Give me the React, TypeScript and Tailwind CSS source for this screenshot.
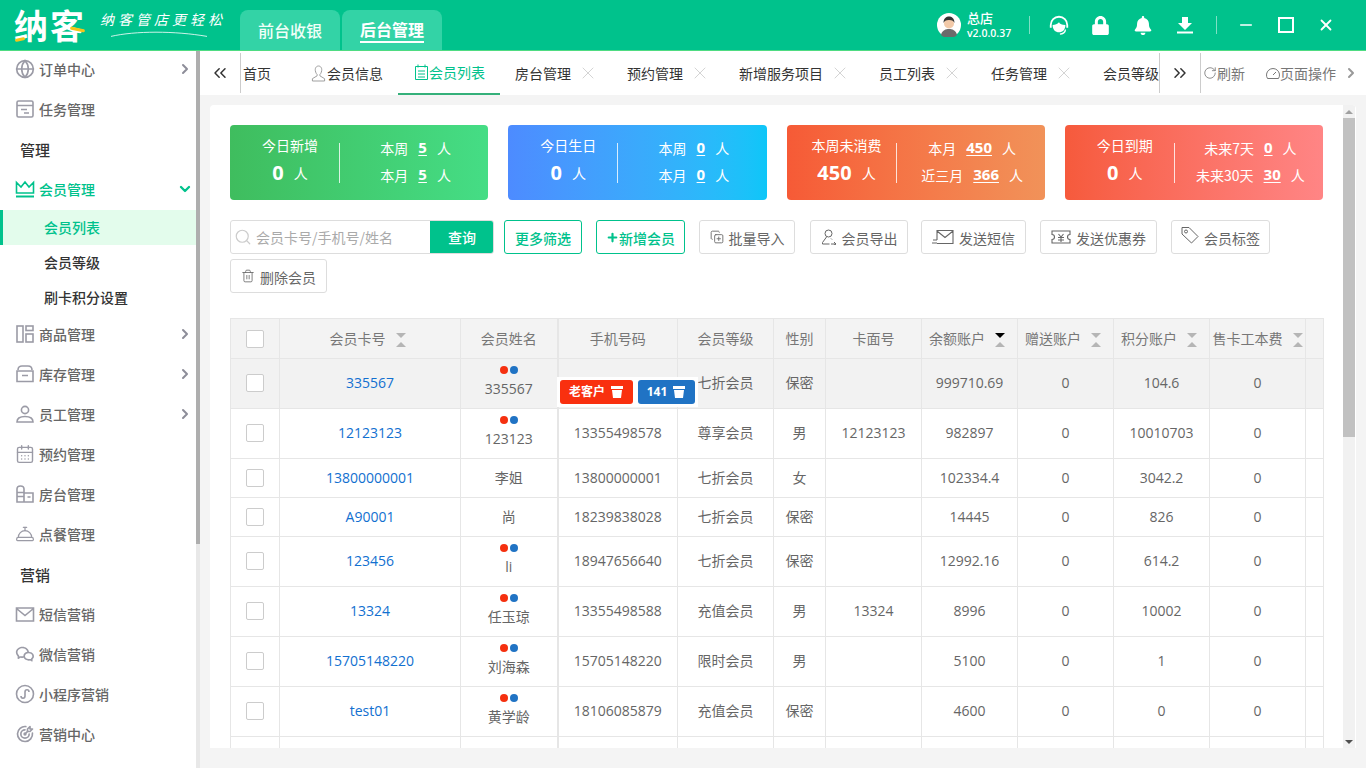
import { ChevronRight, ChevronDown, ChevronsLeft, ChevronsRight, X, Minus, Search, Plus, RotateCw, Trash2, CopyPlus, Globe, CalendarDays, ConciergeBell } from "lucide-react";
import { RiWechatLine } from "react-icons/ri";
import { TbTargetArrow } from "react-icons/tb";
import { FaBell, FaLock } from "react-icons/fa";
import type { ReactNode } from "react";

const FONT = { fontFamily: '"Open Sans", "Noto Sans CJK SC", sans-serif' };

function IconBox({ children }: { children: ReactNode }) {
  return (
    <svg viewBox="0 0 20 20" className="h-5 w-5 shrink-0" fill="none" stroke="currentColor" strokeWidth="1.6">
      {children}
    </svg>
  );
}

const TaskIcon = () => (
  <IconBox>
    <rect x="2" y="2" width="16" height="16" rx="1.5" />
    <path d="M2 6.5h16M6 10.5h6M9 14h5" />
  </IconBox>
);
const GoodsIcon = () => (
  <IconBox>
    <rect x="2" y="2" width="6" height="16" />
    <rect x="11" y="2" width="7" height="4.5" />
    <rect x="11" y="10" width="7" height="8" />
  </IconBox>
);
const StockIcon = () => (
  <IconBox>
    <path d="M3 6c0-3 2-4 4-4h6c2 0 4 1 4 4M2 7h16v10.5H2zM7 11.5h6" />
  </IconBox>
);
const StaffIcon = () => (
  <IconBox>
    <circle cx="10" cy="6" r="3.6" />
    <path d="M2 18c0-4 3-5.5 8-5.5s8 1.5 8 5.5z" />
  </IconBox>
);
const RoomIcon = () => (
  <IconBox>
    <path d="M2 18V5c0-2 1.500-3 3.500-3S9 3 9 5v13zM2 8.500h7M2 12.500h7M9 9h9v9H9zM12.500 13h3" />
  </IconBox>
);
const MiniIcon = () => (
  <IconBox>
    <circle cx="10" cy="10" r="8.500" />
    <path d="M6 12c0 3 4 3 4 0V8c0-3 4-3 4 0" />
  </IconBox>
);
const CrownIcon = () => (
  <IconBox>
    <path d="M1.500 14V3.500L6 8l4-5 4 5 4.500-4.500V14z" />
    <path d="M1 17.500h18" strokeWidth="2" />
  </IconBox>
);
const SmsIcon = () => (
  <IconBox>
    <path d="M1.500 4h17v13h-17zM1.500 4.500l8.500 7 8.500-7" />
  </IconBox>
);

type MenuItem = { label: string; icon: ReactNode; arrow?: boolean };
const topItems: MenuItem[] = [
  { label: "订单中心", icon: <Globe className="h-5 w-5" strokeWidth={2} />, arrow: true },
  { label: "任务管理", icon: <TaskIcon /> },
];
const midItems: MenuItem[] = [
  { label: "商品管理", icon: <GoodsIcon />, arrow: true },
  { label: "库存管理", icon: <StockIcon />, arrow: true },
  { label: "员工管理", icon: <StaffIcon />, arrow: true },
  { label: "预约管理", icon: <CalendarDays className="h-5 w-5" strokeWidth={1.7} /> },
  { label: "房台管理", icon: <RoomIcon /> },
  { label: "点餐管理", icon: <ConciergeBell className="h-5 w-5" strokeWidth={1.5} /> },
];
const saleItems: MenuItem[] = [
  { label: "短信营销", icon: <SmsIcon /> },
  { label: "微信营销", icon: <RiWechatLine className="h-5 w-5" /> },
  { label: "小程序营销", icon: <MiniIcon /> },
  { label: "营销中心", icon: <TbTargetArrow className="h-5 w-5" /> },
];

function MenuRow({ item }: { item: MenuItem }) {
  return (
    <div className="flex h-10 items-center pb-[2px] pl-[15px] pr-[3px] text-[#666]">
      <span className="flex h-5 w-5 text-[#9b9ba6]">{item.icon}</span>
      <span className="ml-1 flex-1 text-sm font-medium leading-none">{item.label}</span>
      {item.arrow && <ChevronRight className="h-4 w-4 text-[#8d8d99]" strokeWidth={3} />}
    </div>
  );
}

function Sidebar() {
  return (
    <aside className="flex w-[200px] shrink-0 bg-white">
      <div className="-mt-px w-[196px]">
        {topItems.map((m) => (
          <MenuRow key={m.label} item={m} />
        ))}
        <div className="flex h-10 items-center pl-5 text-[15px] font-medium text-[#333]">管理</div>
        <div className="flex h-10 items-center pb-[2px] pl-[15px] pr-[3px] text-[#00c28c]">
          <CrownIcon />
          <span className="ml-1 flex-1 text-sm font-medium leading-none">会员管理</span>
          <ChevronDown className="h-4 w-4" strokeWidth={3.5} />
        </div>
        <div className="flex h-[35px] items-center border-l-[3px] border-[#00c28c] bg-[#e3fcec] pb-[2px] pl-[41px] text-sm font-medium text-[#00c28c]">
          会员列表
        </div>
        <div className="flex h-[35px] items-center pb-[2px] pl-11 text-sm font-medium text-[#333]">会员等级</div>
        <div className="flex h-[35px] items-center pb-[2px] pl-11 text-sm font-medium text-[#333]">刷卡积分设置</div>
        {midItems.map((m) => (
          <MenuRow key={m.label} item={m} />
        ))}
        <div className="flex h-10 items-center pl-5 text-[15px] font-medium text-[#333]">营销</div>
        {saleItems.map((m) => (
          <MenuRow key={m.label} item={m} />
        ))}
      </div>
      <div className="w-1 bg-[#e8e8e8]">
        <div className="h-[493px] bg-[#aeaeae]" />
      </div>
    </aside>
  );
}

function Header() {
  return (
    <header className="flex h-[51px] shrink-0 items-end border-b border-[#4fdc82] bg-[#00c28c] text-white">
      <div className="relative flex h-full w-[240px] shrink-0 items-center pl-[14px]">
        <span className="text-[34px] font-bold leading-none tracking-[2px]">纳客</span>
        <span className="absolute bottom-[9px] left-[15px] h-[3px] w-[10px] -rotate-12 rounded bg-[#f5c518]" />
        <span className="absolute bottom-[19px] left-[70px] h-[3px] w-[15px] rotate-12 rounded bg-[#f5c518]" />
        <div className="ml-[14px] flex flex-col">
          <span className="whitespace-nowrap text-[14px] italic leading-none tracking-[4px]">纳客管店更轻松</span>
          <svg viewBox="0 0 120 10" className="mt-[4px] h-[8px] w-[118px]" fill="none" stroke="white" strokeWidth="1">
            <path d="M0 8C30 1 80 1 120 8" />
          </svg>
        </div>
      </div>
      <div className="flex h-10 w-[100px] items-center justify-center rounded-t-lg bg-[#33d3a6] text-base font-medium text-[#f0fff8]">
        前台收银
      </div>
      <div className="ml-[2px] flex h-10 w-[100px] items-center justify-center rounded-t-lg bg-[#33d3a6] text-base font-bold">
        <span className="border-b-2 border-white leading-[23px]">后台管理</span>
      </div>
      <div className="flex h-full flex-1 items-center justify-end">
        <svg viewBox="0 0 24 24" className="h-6 w-6 shrink-0">
          <circle cx="12" cy="12" r="12" fill="#fff" />
          <path d="M4 22c1-5 5-6 8-6s7 1 8 6a12 12 0 0 1-16 0z" fill="#6b6b6b" />
          <circle cx="12" cy="10.500" r="5" fill="#f2c9a8" />
          <path d="M6.500 10c0-5 3-6.500 5.500-6.500s5.500 1.500 5.500 6.500c-1-2-2-3-5.500-3s-4.500 1-5.500 3z" fill="#333" />
        </svg>
        <div className="ml-[6px] flex w-[62px] flex-col">
          <span className="text-[13px] font-medium leading-[17px]">总店</span>
          <span className="whitespace-nowrap text-[10.500px] font-semibold leading-[15px]" style={FONT}>v2.0.0.37</span>
        </div>
        <div className="h-[18px] w-px bg-[#7fe0c5]" />
        <svg viewBox="0 0 24 24" className="ml-[18px] h-[22px] w-[22px]" fill="none" stroke="white" strokeWidth="2">
          <path d="M3 15v-3a9 9 0 0 1 18 0v3" />
          <path d="M5 12c3 0 5-1 7-3 1 2 3 3 7 3 0 5-3 8-7 8s-7-3-7-8z" fill="white" stroke="none" />
          <path d="M19 17c0 3-3 5-6 5" strokeWidth="1.500" />
        </svg>
        <FaLock className="ml-[22px] h-[19px] w-[17px]" />
        <FaBell className="ml-[25px] h-[19px] w-[18px]" />
        <svg viewBox="0 0 18 18" className="ml-[24px] h-[18px] w-[18px]" fill="white">
          <path d="M6 1h6v6h4l-7 7-7-7h4zM1 15.500h16V17.500H1z" />
        </svg>
        <div className="ml-[22px] h-[18px] w-px bg-[#7fe0c5]" />
        <Minus className="ml-[20px] h-[18px] w-[18px]" strokeWidth={2.2} />
        <svg viewBox="0 0 18 18" className="ml-[22px] h-[18px] w-[18px]" fill="none" stroke="white" strokeWidth="2">
          <rect x="2" y="2" width="14" height="14" />
        </svg>
        <X className="ml-[22px] mr-[31px] h-[18px] w-[18px]" strokeWidth={2.4} />
      </div>
    </header>
  );
}

const closableTabs = ["房台管理", "预约管理", "新增服务项目", "员工列表", "任务管理"];

function TabBar() {
  return (
    <div className="flex h-11 shrink-0 items-center bg-white text-sm text-[#333]">
      <div className="flex h-10 w-[41px] shrink-0 items-center justify-center border-r border-[#ccc]">
        <ChevronsLeft className="h-5 w-5 text-[#333]" strokeWidth={1.8} />
      </div>
      <div className="flex h-full w-[918px] shrink-0 items-center overflow-hidden whitespace-nowrap">
        <span className="ml-[2px] w-[68px] shrink-0">首页</span>
        <span className="flex w-[87px] shrink-0 items-center">
          <svg viewBox="0 0 16 18" className="mr-px h-[17px] w-[15px] text-[#999]" fill="none" stroke="currentColor" strokeWidth="1">
            <path d="M5 7.500C3.500 3 6 1 8 1s4.500 2 3 6.500c-.5 1.500-1 2-1.500 2.500v1.500l5 3V17H1.500v-2.500l5-3V10c-.5-.5-1-1-1.500-2.500z" />
          </svg>
          <span>会员信息</span>
        </span>
        <span className="flex h-full w-[102px] shrink-0 items-center border-b-2 border-[#35b07a] pl-[16px] text-[#00c28c]">
          <svg viewBox="0 0 15 16" className="h-4 w-[15px]" fill="none" stroke="currentColor" strokeWidth="1">
            <path d="M1.500 2.500h12v13h-12zM4 .5v3M11 .5v3M4 7h7M4 10h7M4 13h7" />
          </svg>
          <span className="mb-px">会员列表</span>
        </span>
        {closableTabs.map((t) => (
          <span key={t} className="flex shrink-0 items-center pl-[15px] pr-[14px]">
            <span>{t}</span>
            <X className="ml-[7px] h-5 w-5 text-[#d0d0d0]" strokeWidth={1.1} />
          </span>
        ))}
        <span className="shrink-0 pl-[15px]">会员等级</span>
      </div>
      <div className="flex h-10 w-[42px] shrink-0 items-center justify-center border-x border-[#ccc]">
        <ChevronsRight className="h-5 w-5 text-[#333]" strokeWidth={1.8} />
      </div>
      <div className="flex items-center text-[#777]">
        <RotateCw className="ml-[2px] h-[14px] w-[14px]" strokeWidth={1.4} />
        <span>刷新</span>
        <svg viewBox="0 0 14 14" className="ml-[21px] h-[14px] w-[14px]" fill="none" stroke="currentColor" strokeWidth="1">
          <path d="M1.500 12.500a6.500 6.500 0 1 1 11 0zM7 9l3-3" />
        </svg>
        <span>页面操作</span>
        <ChevronRight className="ml-[7px] h-4 w-4 text-[#999]" strokeWidth={3} />
      </div>
    </div>
  );
}

type Stat = {
  title: string;
  value: string;
  bg: string;
  rows: { label: string; value: string }[];
};
const stats: Stat[] = [
  {
    title: "今日新增",
    value: "0",
    bg: "bg-gradient-to-r from-[#3fbd5e] to-[#45dd85]",
    rows: [{ label: "本周", value: "5" }, { label: "本月", value: "5" }],
  },
  {
    title: "今日生日",
    value: "0",
    bg: "bg-gradient-to-r from-[#4d8bff] to-[#0dc6f8]",
    rows: [{ label: "本周", value: "0" }, { label: "本月", value: "0" }],
  },
  {
    title: "本周未消费",
    value: "450",
    bg: "bg-gradient-to-r from-[#f65a36] to-[#f19259]",
    rows: [{ label: "本月", value: "450" }, { label: "近三月", value: "366" }],
  },
  {
    title: "今日到期",
    value: "0",
    bg: "bg-gradient-to-r from-[#f65a3c] to-[#ff8585]",
    rows: [{ label: "未来7天", value: "0" }, { label: "未来30天", value: "30" }],
  },
];

function StatCard({ s }: { s: Stat }) {
  return (
    <div className={`flex h-[75px] items-center rounded text-white ${s.bg}`}>
      <div className="flex w-[109px] shrink-0 flex-col items-center pb-[3px] pl-[11px]">
        <span className="text-sm leading-[20px]">{s.title}</span>
        <span className="mt-[4px] flex items-center leading-[30px]">
          <span className="text-xl font-bold" style={FONT}>{s.value}</span>
          <span className="ml-[10px] text-sm">人</span>
        </span>
      </div>
      <div className="h-10 w-px shrink-0 bg-white/80" />
      <div className="flex flex-1 flex-col items-center pb-[2px] pl-[3px] text-sm">
        {s.rows.map((r) => (
          <div key={r.label} className="flex h-[27px] items-center">
            <span>{r.label}</span>
            <span className="ml-[10px] text-[15px] font-bold underline underline-offset-2" style={FONT}>{r.value}</span>
            <span className="ml-[10px]">人</span>
          </div>
        ))}
      </div>
    </div>
  );
}

function ToolButton({ icon, label, className }: { icon: ReactNode; label: string; className: string }) {
  return (
    <button className={`flex h-[34px] items-center justify-center rounded-[3px] border border-[#ddd] bg-white text-sm text-[#666] ${className}`}>
      {icon}
      <span className="ml-[5px] pt-[2px]">{label}</span>
    </button>
  );
}

const ExportIcon = (
  <svg viewBox="0 0 16 16" className="h-4 w-4" fill="none" stroke="currentColor" strokeWidth="1">
    <circle cx="7.500" cy="4.500" r="3.500" />
    <path d="M5.500 8L1.500 13.500V15h7M10 9.500l1 1M10 15h5M13 13l2 2-2 1" />
  </svg>
);
const SmsToolIcon = (
  <svg viewBox="0 0 22 16" className="h-4 w-[22px]" fill="none" stroke="currentColor" strokeWidth="1.100">
    <path d="M5 11V1.500h16v13H5M5 2l8 6.500L21 2M1 11h4M0 14h5" />
  </svg>
);
const CouponIcon = (
  <svg viewBox="0 0 20 14" className="h-[14px] w-5" fill="none" stroke="currentColor" strokeWidth="1.100">
    <path d="M1 1h18v3.500a2.500 2.500 0 0 0 0 5V13H1V9.500a2.500 2.500 0 0 0 0-5zM7.500 4l2.500 3 2.500-3M7 7.500h6M7 10h6M10 7v5" />
  </svg>
);
const TagIcon = (
  <svg viewBox="0 0 18 18" className="mb-[5px] h-[18px] w-[18px]" fill="none" stroke="currentColor" strokeWidth="1">
    <path d="M1 1.500h7l9 9-6.500 6.500-9.500-9z" />
    <circle cx="5" cy="5.500" r="1.500" />
  </svg>
);

function Toolbar() {
  return (
    <div className="mt-5 flex flex-wrap items-center gap-y-[5px]">
      <div className="flex h-[34px] w-[264px] overflow-hidden rounded-[3px] border border-[#ddd]">
        <div className="flex flex-1 items-center pl-[3px] text-sm text-[#aaa]">
          <Search className="h-[18px] w-[18px] text-[#ccc]" strokeWidth={1.6} />
          <span className="ml-[4px]">会员卡号/手机号/姓名</span>
        </div>
        <div className="-my-px -mr-px flex w-16 items-center justify-center bg-[#00c28c] text-sm font-medium text-white">查询</div>
      </div>
      <button className="ml-[10px] h-[34px] w-[78px] rounded-[3px] border border-[#00c28c] pt-[2px] text-sm font-medium text-[#00c28c]">更多筛选</button>
      <button className="ml-[14px] flex h-[34px] w-[89px] items-center justify-center rounded-[3px] border border-[#00c28c] text-sm font-medium text-[#00c28c]">
        <Plus className="h-[13px] w-[13px]" strokeWidth={4} />
        <span className="pt-[2px]">新增会员</span>
      </button>
      <ToolButton className="ml-[14px] w-[96px]" label="批量导入" icon={<CopyPlus className="h-[14px] w-[14px]" strokeWidth={1.5} />} />
      <ToolButton className="ml-[15px] w-[98px]" label="会员导出" icon={ExportIcon} />
      <ToolButton className="ml-[13px] w-[105px]" label="发送短信" icon={SmsToolIcon} />
      <ToolButton className="ml-[14px] w-[117px]" label="发送优惠券" icon={CouponIcon} />
      <ToolButton className="ml-[14px] w-[99px]" label="会员标签" icon={TagIcon} />
      <ToolButton className="w-[97px]" label="删除会员" icon={<Trash2 className="h-[14px] w-[14px]" strokeWidth={1.4} />} />
    </div>
  );
}

function SortCaret({ active, tight }: { active?: boolean; tight?: boolean }) {
  return (
    <span className={`ml-[10px] inline-flex flex-col gap-[4px] align-middle ${tight ? "" : "mr-[5px]"}`}>
      <span className={`h-0 w-0 border-x-[5px] border-t-[5px] border-x-transparent ${active ? "border-t-black" : "border-t-[#b5b5b5]"}`} />
      <span className="h-0 w-0 border-x-[5px] border-b-[5px] border-x-transparent border-b-[#b5b5b5]" />
    </span>
  );
}

const Checkbox = () => <span className="mx-auto block h-[18px] w-[18px] rounded-[2px] border border-[#ccc] bg-white" />;

const Dots = () => (
  <span className="mb-[4px] flex justify-center gap-[2px]">
    <span className="h-2 w-2 rounded-full bg-[#f5300f]" />
    <span className="h-2 w-2 rounded-full bg-[#2073c4]" />
  </span>
);

const CupIcon = () => (
  <svg viewBox="0 0 14 12" className="ml-[5px] h-3 w-[14px]" fill="white">
    <path d="M1 0h12v3H1zM2 4h10l-1 8H3z" />
  </svg>
);

type Row = {
  card: string;
  name: string;
  dots: boolean;
  phone: string;
  level: string;
  sex: string;
  face: string;
  balance: string;
  gift: string;
  points: string;
  h: string;
};
const TALL = "h-[50px] [&>td]:pb-[2px]";
const rows: Row[] = [
  { card: "335567", name: "335567", dots: true, phone: "", level: "七折会员", sex: "保密", face: "", balance: "999710.69", gift: "0", points: "104.6", h: TALL },
  { card: "12123123", name: "123123", dots: true, phone: "13355498578", level: "尊享会员", sex: "男", face: "12123123", balance: "982897", gift: "0", points: "10010703", h: TALL },
  { card: "13800000001", name: "李姐", dots: false, phone: "13800000001", level: "七折会员", sex: "女", face: "", balance: "102334.4", gift: "0", points: "3042.2", h: "h-[39px]" },
  { card: "A90001", name: "尚", dots: false, phone: "18239838028", level: "七折会员", sex: "保密", face: "", balance: "14445", gift: "0", points: "826", h: "h-[39px]" },
  { card: "123456", name: "li", dots: true, phone: "18947656640", level: "七折会员", sex: "保密", face: "", balance: "12992.16", gift: "0", points: "614.2", h: TALL },
  { card: "13324", name: "任玉琼", dots: true, phone: "13355498588", level: "充值会员", sex: "男", face: "13324", balance: "8996", gift: "0", points: "10002", h: TALL },
  { card: "15705148220", name: "刘海森", dots: true, phone: "15705148220", level: "限时会员", sex: "男", face: "", balance: "5100", gift: "0", points: "1", h: TALL },
  { card: "test01", name: "黄学龄", dots: true, phone: "18106085879", level: "充值会员", sex: "保密", face: "", balance: "4600", gift: "0", points: "0", h: TALL },
  { card: "", name: "", dots: true, phone: "", level: "", sex: "", face: "", balance: "", gift: "", points: "", h: TALL },
];

const headers: { label: ReactNode; sort?: boolean; active?: boolean; tight?: boolean }[] = [
  { label: <Checkbox /> },
  { label: "会员卡号", sort: true },
  { label: "会员姓名" },
  { label: "手机号码" },
  { label: "会员等级" },
  { label: "性别" },
  { label: "卡面号" },
  { label: "余额账户", sort: true, active: true },
  { label: "赠送账户", sort: true },
  { label: "积分账户", sort: true },
  { label: "售卡工本费", sort: true, tight: true },
  { label: "" },
];

const colWidths = ["w-[49px]", "w-[181px]", "w-[97px]", "w-[120px]", "w-[96px]", "w-[52px]", "w-[96px]", "w-[96px]", "w-[96px]", "w-[96px]", "w-[96px]", "w-[18px]"];

function MemberTable() {
  const td = "border border-[#e6e6e6] p-0 text-center";
  return (
    <table className="mt-[25px] w-[1093px] table-fixed border-collapse text-sm text-[#666]" style={FONT}>
      <colgroup>
        {colWidths.map((w, i) => (
          <col key={i} className={w} />
        ))}
      </colgroup>
      <thead>
        <tr className="h-10 bg-[#f3f3f3]">
          {headers.map((h, i) => (
            <th key={i} className={`${td} whitespace-nowrap text-sm font-normal text-[#777] ${i === 2 ? "border-r-2" : ""}`}>
              {h.label}
              {h.sort && <SortCaret active={h.active} tight={h.tight} />}
            </th>
          ))}
        </tr>
      </thead>
      <tbody>
        {rows.map((r, i) => (
          <tr key={i} className={`${r.h} ${i === 0 ? "bg-[#f2f2f2]" : "bg-white"}`}>
            <td className={td}><Checkbox /></td>
            <td className={`${td} text-[#1270d0]`}>{r.card}</td>
            <td className={`${td} relative border-r-2`}>
              {r.dots && <Dots />}
              <span className="block leading-[22px]">{r.name}</span>
              {i === 0 && (
                <div className="absolute left-[96px] top-[18px] z-10 flex h-[30px] w-[141px] items-center gap-[5px] bg-white pl-[3px] text-xs font-bold text-white">
                  <span className="flex h-6 w-[73px] items-center justify-center rounded-[3px] bg-[#f9300f]">老客户<CupIcon /></span>
                  <span className="flex h-6 w-[57px] items-center justify-center rounded-[3px] bg-[#2073c4]">141<CupIcon /></span>
                </div>
              )}
            </td>
            <td className={td}>{r.phone}</td>
            <td className={td}>{r.level}</td>
            <td className={td}>{r.sex}</td>
            <td className={td}>{r.face}</td>
            <td className={td}>{r.balance}</td>
            <td className={td}>{r.gift}</td>
            <td className={td}>{r.points}</td>
            <td className={td}>{r.gift}</td>
            <td className={td} />
          </tr>
        ))}
      </tbody>
    </table>
  );
}

function MainScrollbar() {
  return (
    <div className="mr-px flex w-3 shrink-0 flex-col items-center bg-[#f1f1f1]">
      <div className="flex h-[13px] items-center"><span className="h-0 w-0 border-x-[4px] border-b-[4px] border-x-transparent border-b-[#a0a0a0]" /></div>
      <div className="h-[319px] w-full bg-[#c1c1c1]" />
      <div className="flex-1" />
      <div className="flex h-[13px] items-center"><span className="h-0 w-0 border-x-[4px] border-t-[4px] border-x-transparent border-t-[#505050]" /></div>
    </div>
  );
}

export default function App() {
  return (
    <div className="flex h-[768px] w-[1366px] flex-col overflow-hidden bg-[#f4f4f4]" style={{ fontFamily: '"Noto Sans CJK SC", sans-serif' }}>
      <Header />
      <div className="flex min-h-0 flex-1">
        <Sidebar />
        <div className="flex min-w-0 flex-1 flex-col">
          <TabBar />
          <div className="mx-[10px] mb-5 mt-[10px] flex min-h-0 flex-1 overflow-hidden rounded-t bg-white">
            <div className="min-w-0 flex-1 overflow-hidden px-5 pt-5">
              <div className="grid grid-cols-4 gap-5">
                {stats.map((s) => (
                  <StatCard key={s.title} s={s} />
                ))}
              </div>
              <Toolbar />
              <MemberTable />
            </div>
            <MainScrollbar />
          </div>
        </div>
      </div>
    </div>
  );
}
